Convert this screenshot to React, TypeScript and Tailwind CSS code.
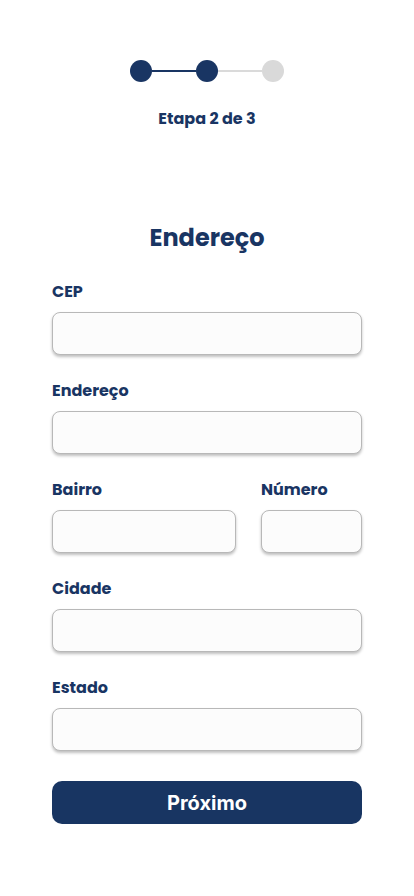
import React from "react";

const font = { fontFamily: "'Poppins', 'DejaVu Sans', 'Noto Sans', sans-serif" };

function Field({ label, className = "" }: { label: string; className?: string }) {
  return (
    <div className={`flex flex-col ${className}`}>
      <label className="text-[16px] leading-[20px] font-bold text-[#193563] h-[20px]">{label}</label>
      <div className="mt-[10px] h-[43px] rounded-[8px] border border-[#b8b8b8] bg-[#fcfcfc] shadow-[0_2px_3px_rgba(0,0,0,0.25)]" />
    </div>
  );
}

export default function App() {
  return (
    <div className="min-h-[896px] bg-white" style={font}>
      <div className="flex flex-col items-center pt-[60px]">
        <div className="flex items-center">
          <div className="w-[22px] h-[22px] rounded-full bg-[#193563]" />
          <div className="w-[44px] h-[2px] bg-[#193563]" />
          <div className="w-[22px] h-[22px] rounded-full bg-[#193563]" />
          <div className="w-[44px] h-[2px] bg-[#dadada]" />
          <div className="w-[22px] h-[22px] rounded-full bg-[#d9d9d9]" />
        </div>
        <div className="mt-[27px] text-[16px] leading-[20px] font-bold text-[#193563]">Etapa 2 de 3</div>
        <h1 className="mt-[93px] text-[24px] leading-[32px] font-bold text-[#193563]">Endereço</h1>
      </div>
      <div className="px-[52px] pt-[28px] flex flex-col gap-[26px]">
        <Field label="CEP" />
        <Field label="Endereço" />
        <div className="flex gap-[25px]">
          <Field label="Bairro" className="flex-1" />
          <Field label="Número" className="w-[101px]" />
        </div>
        <Field label="Cidade" />
        <Field label="Estado" />
      </div>
      <div className="px-[52px] mt-[30px]">
        <button
          className="w-full h-[43px] rounded-[10px] bg-[#183562] text-white text-[20px] font-bold"
          style={{ fontFamily: "Inter, 'Noto Sans', sans-serif" }}
        >
          Próximo
        </button>
      </div>
    </div>
  );
}
